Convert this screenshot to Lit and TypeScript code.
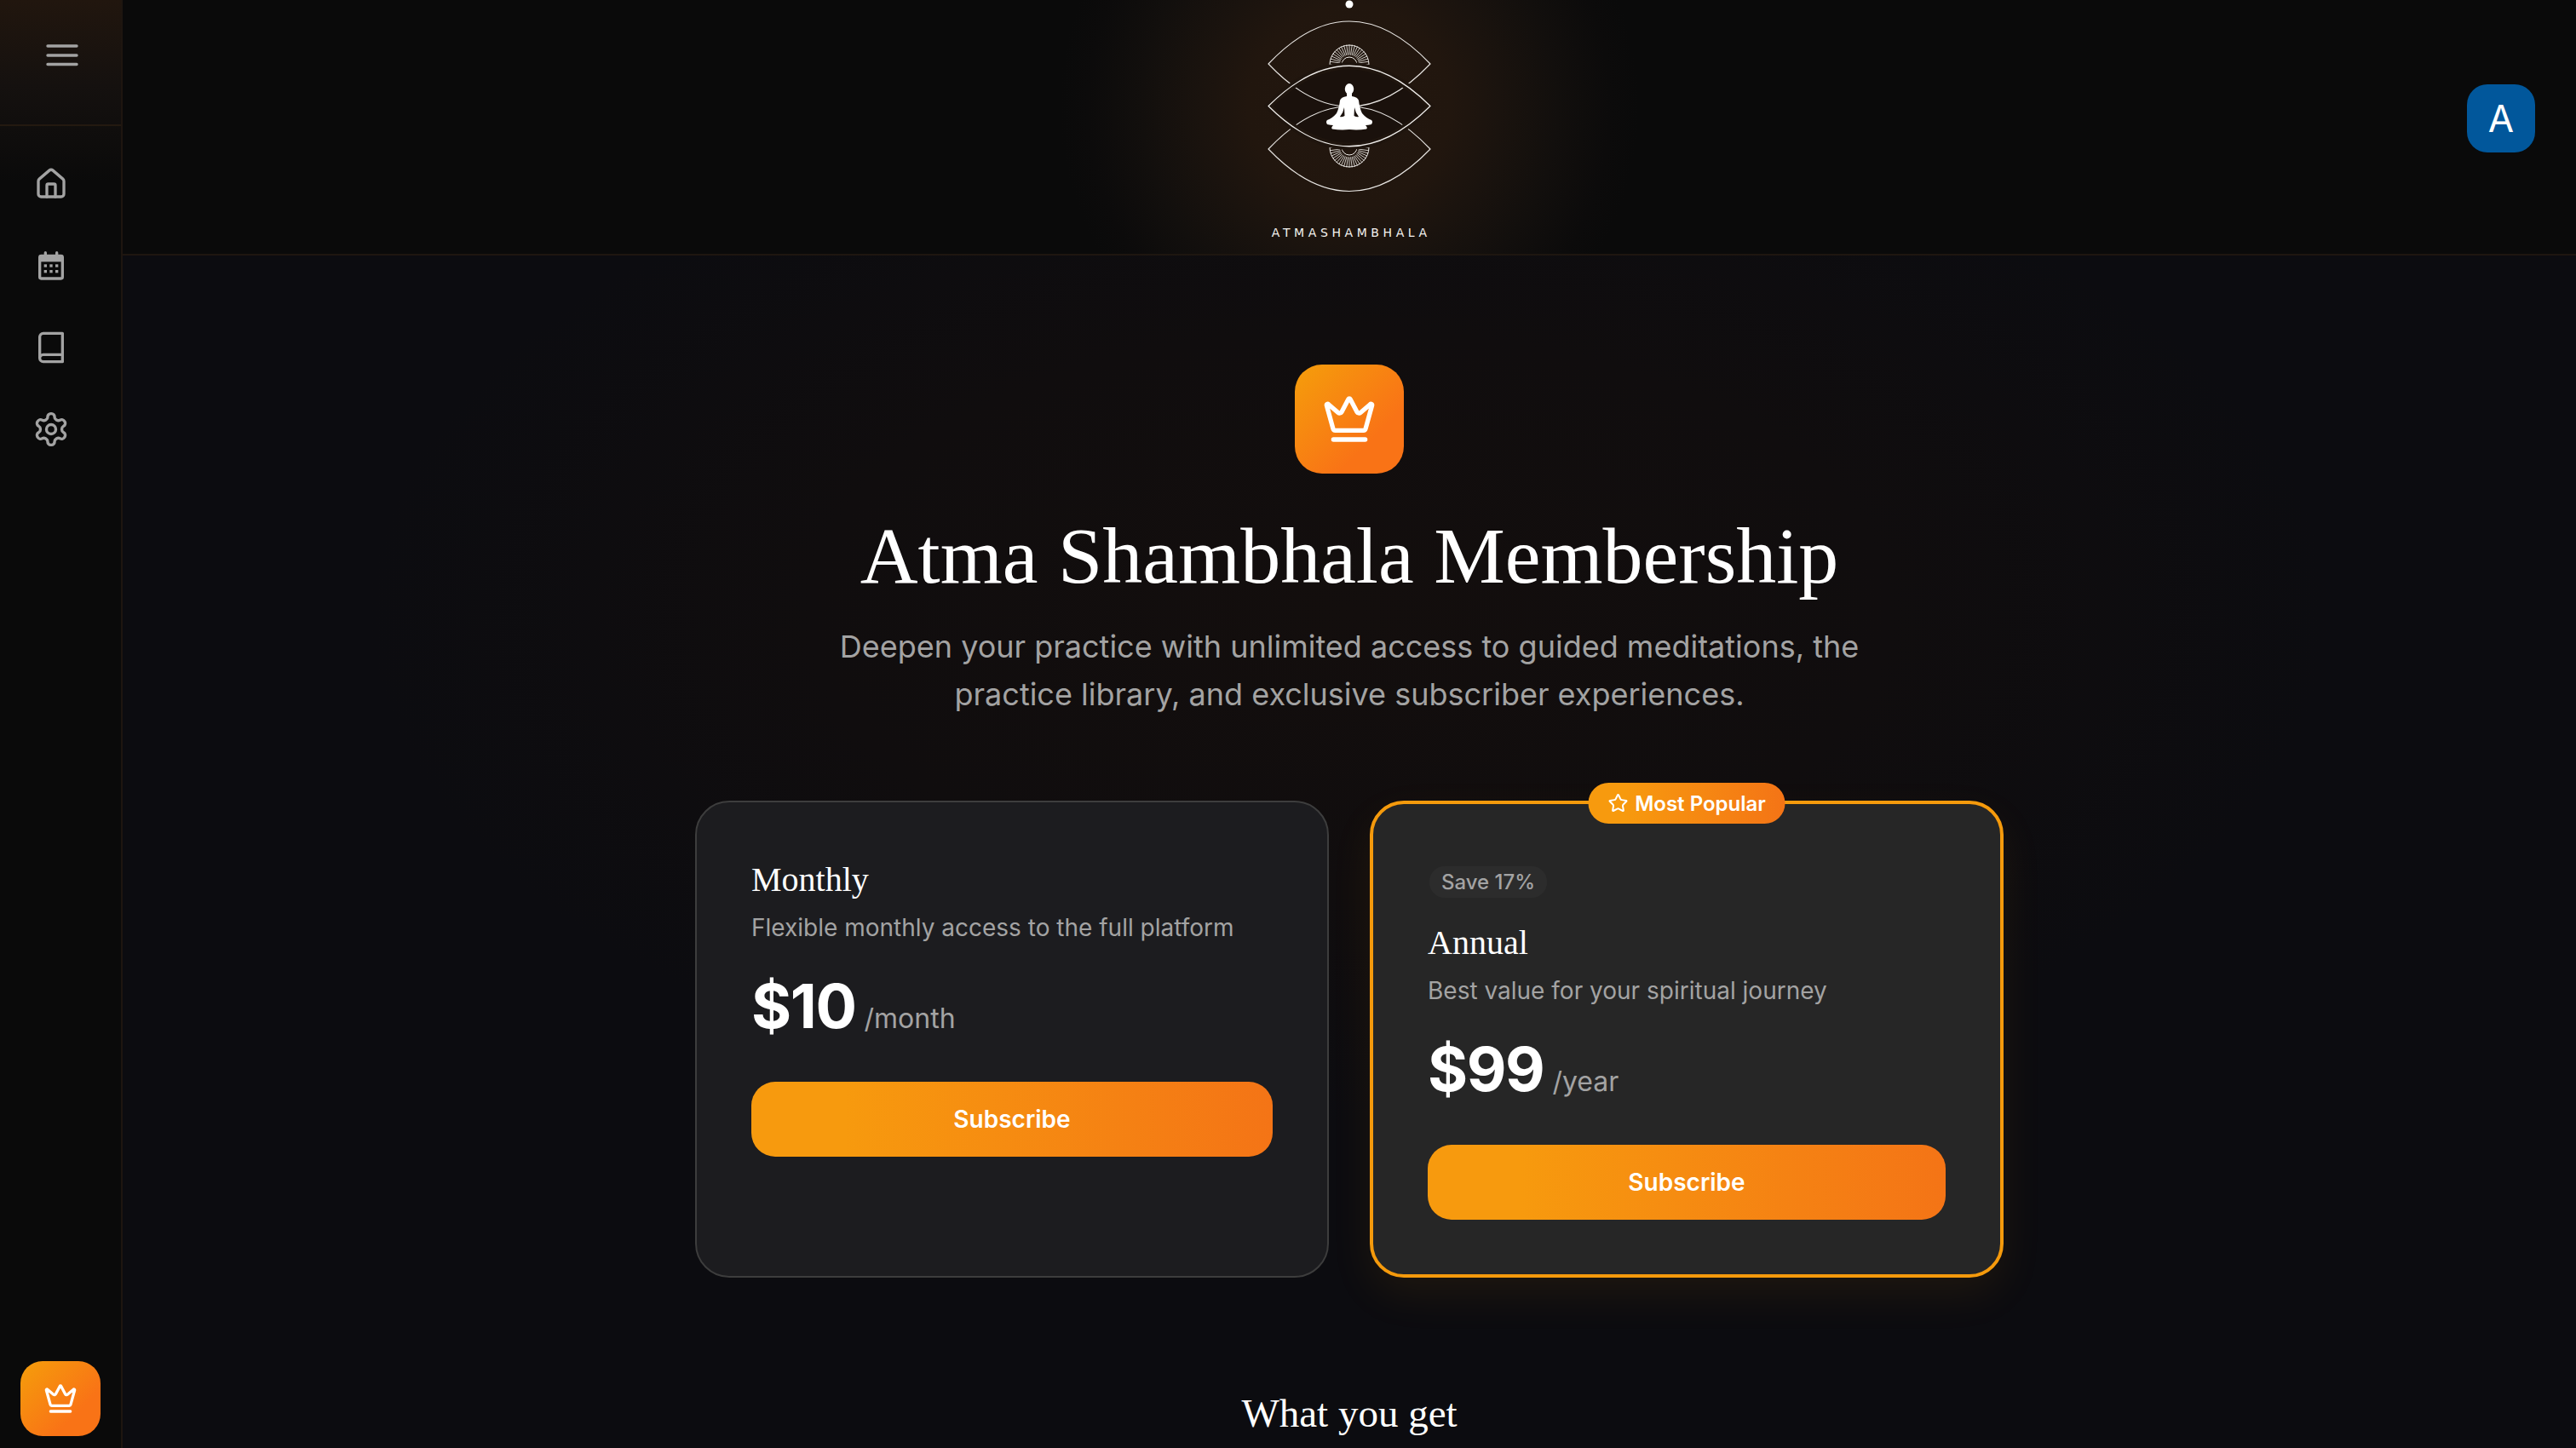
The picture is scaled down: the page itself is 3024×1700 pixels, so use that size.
import { LitElement, html, css, svg } from "lit";
import { customElement } from "lit/decorators.js";

const crownIcon = (cls: string) => html`<svg class=${cls} viewBox="0 0 24 24" fill="none" stroke="#fff" stroke-width="2" stroke-linecap="round" stroke-linejoin="round">
  <path d="M11.562 3.266a.5.5 0 0 1 .876 0L15.39 8.87a1 1 0 0 0 1.516.294L21.183 5.5a.5.5 0 0 1 .798.519l-2.834 10.246a1 1 0 0 1-.956.734H5.81a1 1 0 0 1-.957-.734L2.02 6.02a.5.5 0 0 1 .798-.519l4.276 3.664a1 1 0 0 0 1.516-.294z"/>
  <path d="M5 21h14"/></svg>`;

const rays = (cy: number, dir: number) =>
  Array.from({ length: 23 }, (_, i) => {
    const a = (Math.PI * i) / 22;
    const c = Math.cos(a), s = Math.sin(a) * dir;
    return svg`<line x1=${244 + 11 * c} y1=${cy - 11 * s} x2=${244 + 23 * c} y2=${cy - 23 * s} stroke="#f4f2ef" stroke-width="0.8"/>`;
  });

@customElement("app-root")
export class AppRoot extends LitElement {
  static styles = css`
    :host { display: block; height: 1700px; overflow: hidden; background: #0c0c10; font-family: Inter, "Liberation Sans", sans-serif; color: #fff; }
    * { box-sizing: border-box; }
    .layout { display: grid; grid-template-columns: 144px 1fr; height: 1700px; }
    .side { display: flex; flex-direction: column; height: 1700px; border-right: 2px solid #1e1610; background: linear-gradient(180deg, #21160e 0, #15110f 100px, #0a0a0a 215px); }
    .side-top { height: 148px; flex: none; border-bottom: 2px solid #231910; display: flex; justify-content: center; padding: 46px 0 0 3px; }
    .burger { width: 48px; height: 48px; color: #a3a3a3; }
    .nav { display: flex; flex-direction: column; gap: 56px; padding: 48px 0 0 40px; }
    .nav svg { display: block; width: 40px; height: 40px; color: #a3a3a3; }
    .nav svg.gear { width: 44px; height: 44px; margin: -2px 0 -2px -2px; }
    .premium { margin: auto 0 14px 24px; width: 94px; height: 88px; border-radius: 26px; background: linear-gradient(135deg, #f59e0b 0%, #f97316 70%); display: flex; align-items: center; justify-content: center; }
    .crown-s { width: 40px; height: 40px; }
    main { min-width: 0; display: flex; flex-direction: column; background: radial-gradient(1150px 600px at 50% 720px, #130e0d 0, #100d0e 55%, #0c0c10 100%); }
    header { height: 300px; flex: none; display: grid; grid-template-columns: 1fr 200px 1fr; border-bottom: 2px solid #1e1610; background: radial-gradient(circle 340px at 50% 125px, #23170f 0, #21160e 35%, #1a130e 52%, #120f0d 72%, #0c0b0b 90%, #0a0a0a 100%), #0a0a0a; }
    .logo { display: flex; flex-direction: column; align-items: center; }
    .logo svg { display: block; flex: none; }
    .wordmark { margin-top: 31px; font: 400 14px/20px "DejaVu Sans", sans-serif; letter-spacing: 4.6px; margin-right: -4.6px; white-space: nowrap; color: #f4f2ef; }
    .avatar { justify-self: end; margin: 99px 48px 0 0; width: 80px; height: 80px; border-radius: 24px; background: #01579b; display: flex; align-items: center; justify-content: center; font-size: 44px; line-height: 1; }
    .content { display: flex; flex-direction: column; align-items: center; }
    .hero-icon { margin-top: 128px; width: 128px; height: 128px; border-radius: 32px; background: linear-gradient(135deg, #f59e0b 0%, #f97316 70%); display: flex; align-items: center; justify-content: center; }
    .crown-l { width: 64px; height: 64px; }
    h1 { margin: 40px 0 0; font: 400 94px/112px "Liberation Serif", serif; color: #fff; white-space: nowrap; }
    .lead { margin: 23px 0 0; width: 1300px; text-align: center; font-size: 36px; line-height: 56px; color: #a3a3a3; }
    .plans { margin-top: 97px; width: 1536px; display: grid; grid-template-columns: 1fr 1fr; gap: 48px; }
    .card { position: relative; border-radius: 40px; background: #1c1c1f; border: 2px solid #3d3d3d; padding: 64px; display: flex; flex-direction: column; }
    .card.pop { background: #262626; border: 4px solid #f59a0c; box-shadow: 0 20px 50px rgba(245, 158, 11, 0.08); }
    .badge { position: absolute; top: -25px; left: 50%; transform: translateX(-50%); height: 48px; width: 231px; border-radius: 24px; background: linear-gradient(90deg, #f79a0e 18%, #f47416); display: flex; align-items: center; justify-content: center; gap: 8px; font-size: 24px; font-weight: 600; white-space: nowrap; }
    .badge svg { width: 24px; height: 24px; }
    .save { align-self: flex-start; margin: 9px 0 26px 2px; height: 37px; padding: 0 14px; border-radius: 18px; background: rgba(255, 255, 255, 0.03); color: #a3a3a3; font-size: 24px; font-weight: 500; line-height: 37px; }
    h3 { margin: 1px 0 0; font: 400 40px/52px "Liberation Serif", serif; color: #fff; }
    .desc { margin: 10px 0 0; font-size: 28px; line-height: 40px; color: #a3a3a3; }
    .price { margin-top: 24px; display: flex; align-items: baseline; gap: 10px; height: 96px; }
    .amount { font-size: 72px; line-height: 96px; font-weight: 700; letter-spacing: -1.4px; }
    .per { font-size: 32px; color: #a3a3a3; }
    button { margin-top: 41px; height: 88px; border: 0; border-radius: 28px; background: linear-gradient(90deg, #f79a0e 18%, #f47416); color: #fff; font: 600 28px Inter, "Liberation Sans", sans-serif; }
    h2 { margin: 129px 0 0; font: 400 47px/60px "Liberation Serif", serif; color: #fff; }
  `;

  render() {
    return html`<div class="layout">
      <aside class="side">
        <div class="side-top">
          <svg class="burger" viewBox="0 0 48 48" fill="none" stroke="currentColor" stroke-width="3.4" stroke-linecap="round"><path d="M7 8h34M7 19h34M7 29.5h34"/></svg>
        </div>
        <nav class="nav">
          <svg viewBox="0 0 24 24" fill="none" stroke="currentColor" stroke-width="2" stroke-linecap="round" stroke-linejoin="round"><path d="M15 21v-8a1 1 0 0 0-1-1h-4a1 1 0 0 0-1 1v8"/><path d="M3 10a2 2 0 0 1 .709-1.528l7-5.999a2 2 0 0 1 2.582 0l7 5.999A2 2 0 0 1 21 10v9a2 2 0 0 1-2 2H5a2 2 0 0 1-2-2z"/></svg>
          <svg viewBox="0 0 24 24" fill="none" stroke="currentColor" stroke-width="2" stroke-linejoin="round"><rect x="4" y="5" width="16" height="16" rx="1"/><path d="M4 7.5h16" stroke-width="3.4"/><path d="M8 2.8v2.4M16 2.8v2.4" stroke-linecap="round"/><g fill="currentColor" stroke="none"><rect x="7" y="11" width="2" height="2"/><rect x="11" y="11" width="2" height="2"/><rect x="15" y="11" width="2" height="2"/><rect x="7" y="15" width="2" height="2"/><rect x="11" y="15" width="2" height="2"/><rect x="15" y="15" width="2" height="2"/></g></svg>
          <svg viewBox="0 0 24 24" fill="none" stroke="currentColor" stroke-width="2" stroke-linejoin="round"><path d="M20 2H6.5A2.5 2.5 0 0 0 4 4.5v15A2.5 2.5 0 0 0 6.5 22H20zM4 19.5A2.5 2.5 0 0 1 6.5 17H20"/></svg>
          <svg class="gear" viewBox="0 0 24 24" fill="none" stroke="currentColor" stroke-width="1.85" stroke-linecap="round" stroke-linejoin="round"><path d="M12.22 2h-.44a2 2 0 0 0-2 2v.18a2 2 0 0 1-1 1.73l-.43.25a2 2 0 0 1-2 0l-.15-.08a2 2 0 0 0-2.73.73l-.22.38a2 2 0 0 0 .73 2.73l.15.1a2 2 0 0 1 1 1.72v.51a2 2 0 0 1-1 1.74l-.15.09a2 2 0 0 0-.73 2.73l.22.38a2 2 0 0 0 2.73.73l.15-.08a2 2 0 0 1 2 0l.43.25a2 2 0 0 1 1 1.73V20a2 2 0 0 0 2 2h.44a2 2 0 0 0 2-2v-.18a2 2 0 0 1 1-1.73l.43-.25a2 2 0 0 1 2 0l.15.08a2 2 0 0 0 2.73-.73l.22-.39a2 2 0 0 0-.73-2.73l-.15-.08a2 2 0 0 1-1-1.74v-.5a2 2 0 0 1 1-1.74l.15-.09a2 2 0 0 0 .73-2.73l-.22-.38a2 2 0 0 0-2.73-.73l-.15.08a2 2 0 0 1-2 0l-.43-.25a2 2 0 0 1-1-1.73V4a2 2 0 0 0-2-2z"/><circle cx="12" cy="12" r="3"/></svg>
        </nav>
        <div class="premium">${crownIcon("crown-s")}</div>
      </aside>
      <main>
        <header>
          <span></span>
          <div class="logo">
            <svg width="200" height="232" viewBox="144 0 200 232" fill="none">
              <circle cx="244" cy="5" r="4.5" fill="#fff"/>
              ${rays(75.5, 1)} ${rays(173.5, -1)}
              <path d="M221 76a23 23 0 0 1 46 0M221 173a23 23 0 0 0 46 0M235 76a9 9 0 0 1 18 0M235 173a9 9 0 0 0 18 0" stroke="#f4f2ef" stroke-width="1"/>
              <path d="M149 124.5Q244 30 339 124.5Q244 219 149 124.5Z" fill="#1a110c"/>
              <path d="M149 75Q244 -25 339 75Q244 175 149 75Z" stroke="#e8e6e3" stroke-width="1.1" stroke-linejoin="round"/>
              <path d="M149 175Q244 75 339 175Q244 274 149 175Z" stroke="#e8e6e3" stroke-width="1.1" stroke-linejoin="round"/>
              <path d="M149 124.5Q244 30 339 124.5Q244 219 149 124.5Z" stroke="#1f150e" stroke-width="8"/>
              <path d="M149 124.5Q244 30 339 124.5Q244 219 149 124.5Z" stroke="#f0eeeb" stroke-width="1.2" stroke-linejoin="round"/>
              <ellipse cx="244" cy="104.5" rx="5.2" ry="6.5" fill="#fff"/>
              <path fill="#fff" fill-rule="evenodd" d="M241 109L241 113Q234 114 233 118Q232 127 229 133Q224 139 218 141Q216 143 218 146Q222 147 225 147Q222 150 224 151.5Q234 153 244 152Q254 153 264 151.5Q266 150 263 147Q266 147 270 146Q272 143 270 141Q264 139 259 133Q256 127 255 118Q254 114 247 113L247 109ZM238 126Q237 132 233 137Q235 138 238.5 136ZM250 126Q251 132 255 137Q253 138 249.5 136Z"/>
            </svg>
            <span class="wordmark">ATMASHAMBHALA</span>
          </div>
          <div class="avatar">A</div>
        </header>
        <section class="content">
          <div class="hero-icon">${crownIcon("crown-l")}</div>
          <h1>Atma Shambhala Membership</h1>
          <p class="lead">Deepen your practice with unlimited access to guided meditations, the practice library, and exclusive subscriber experiences.</p>
          <div class="plans">
            <article class="card">
              <h3>Monthly</h3>
              <p class="desc">Flexible monthly access to the full platform</p>
              <div class="price"><span class="amount">$10</span><span class="per">/month</span></div>
              <button>Subscribe</button>
            </article>
            <article class="card pop">
              <div class="badge"><svg viewBox="0 0 24 24" fill="none" stroke="#fff" stroke-width="2" stroke-linejoin="round"><path d="M11.525 2.295a.53.53 0 0 1 .95 0l2.31 4.679a2.123 2.123 0 0 0 1.595 1.16l5.166.756a.53.53 0 0 1 .294.904l-3.736 3.638a2.123 2.123 0 0 0-.611 1.878l.882 5.14a.53.53 0 0 1-.771.56l-4.618-2.428a2.122 2.122 0 0 0-1.973 0L6.396 21.01a.53.53 0 0 1-.77-.56l.881-5.139a2.122 2.122 0 0 0-.611-1.879L2.16 9.795a.53.53 0 0 1 .294-.906l5.165-.755a2.122 2.122 0 0 0 1.597-1.16z"/></svg>Most Popular</div>
              <span class="save">Save 17%</span>
              <h3>Annual</h3>
              <p class="desc">Best value for your spiritual journey</p>
              <div class="price"><span class="amount">$99</span><span class="per">/year</span></div>
              <button>Subscribe</button>
            </article>
          </div>
          <h2>What you get</h2>
        </section>
      </main>
    </div>`;
  }
}
